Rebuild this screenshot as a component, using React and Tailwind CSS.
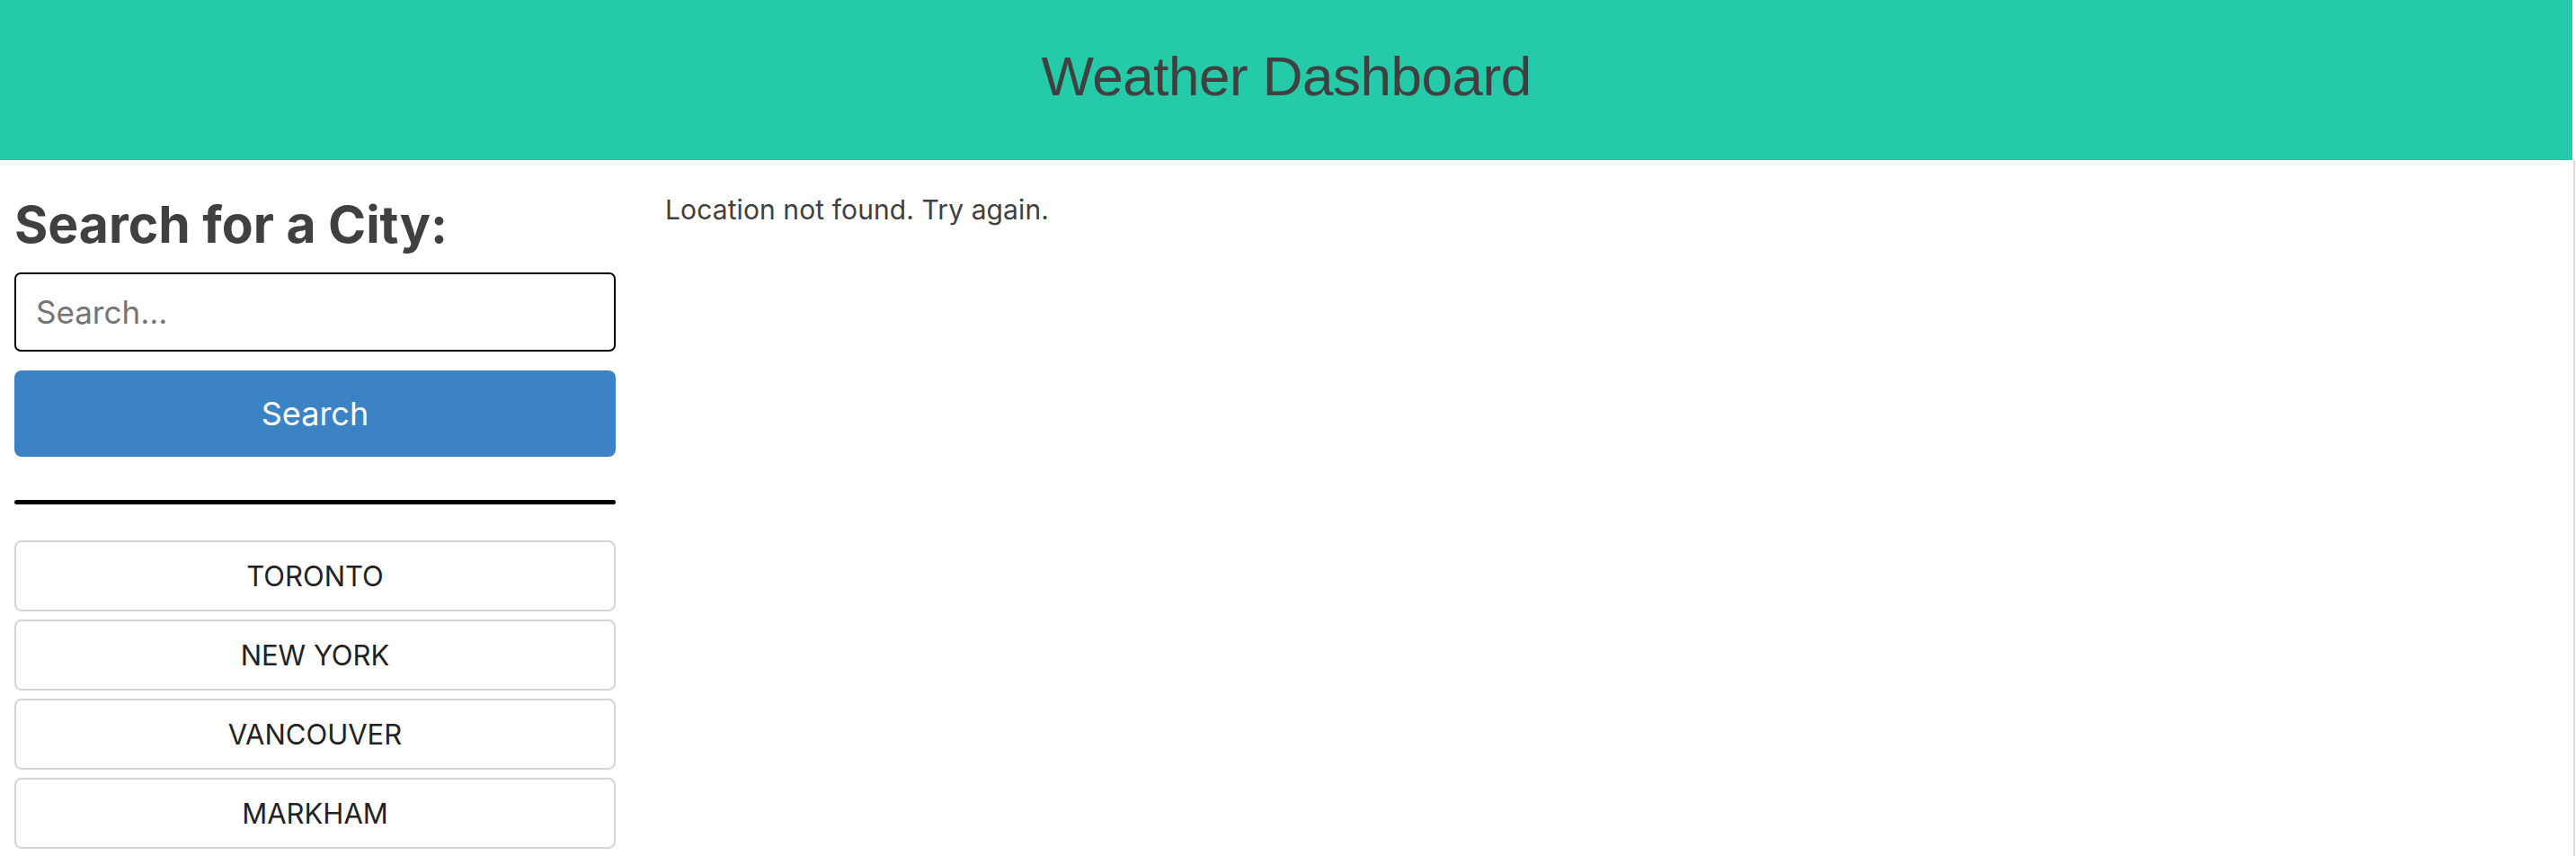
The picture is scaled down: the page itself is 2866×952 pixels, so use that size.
import React from "react";

const cities = ["TORONTO", "NEW YORK", "VANCOUVER", "MARKHAM"];

const sans = { fontFamily: "Inter, 'Noto Sans', sans-serif" };

export default function App() {
  return (
    <div className="min-h-[952px] bg-white text-[#404040]" style={sans}>
      {/* HEADER */}
      <header className="w-[2862px] h-[178px] bg-[#25caa9] flex items-center justify-center">
        <h1 className="text-[62px] leading-none tracking-[-0.5px] font-normal text-[#404040] font-['Liberation_Sans',Arial,sans-serif] pb-[8px]">
          Weather Dashboard
        </h1>
      </header>

      {/* BODY */}
      <div className="w-[2865px] min-h-[774px] flex border-r-2 border-[#dcdcdc]">
        {/* LEFT: SEARCH */}
        <div className="w-[685px] pl-[16px] pt-[38px] flex flex-col">
          <h2 className="text-[57px] leading-[1.2] font-bold text-[#404040]">
            Search for a City:
          </h2>
          <input
            type="text"
            placeholder="Search..."
            className="mt-[19px] h-[88px] w-full border-2 border-black rounded-[7px] px-[22px] text-[35px] text-[#404040] placeholder:text-[#757575] outline-none"
          />
          <button className="mt-[21px] h-[96px] w-full bg-[#3b83c5] rounded-[8px] text-white text-[36px]">
            Search
          </button>
          <div className="mt-[48px] h-0 border-b-[5px] border-black rounded-[8px]" />

          <div className="mt-[40px] flex flex-col gap-[9px]">
            {cities.map((city) => (
              <button
                key={city}
                className="h-[79px] w-full border-2 border-[#d6d6d6] rounded-[8px] bg-white text-[31px] text-[#222]"
              >
                {city}
              </button>
            ))}
          </div>
        </div>

        {/* RIGHT: RESULT */}
        <div className="flex-1 pl-[55px] pt-[33px]">
          <p className="text-[30px] leading-[1.5] tracking-[0.1px] text-[#404040]">
            Location not found. Try again.
          </p>
        </div>
      </div>
    </div>
  );
}
